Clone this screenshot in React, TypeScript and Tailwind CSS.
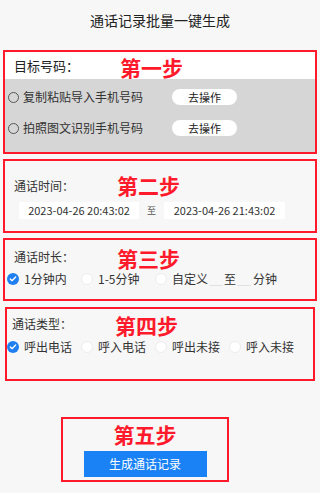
import { Check } from "lucide-react";

const font = { fontFamily: '"Noto Sans CJK SC", "Noto Sans", sans-serif' };

const Step = ({ text, className = "" }: { text: string; className?: string }) => (
  <span className={`text-[21px] font-bold leading-none text-[#ff1a2b] ${className}`}>{text}</span>
);

const Dot = ({ checked }: { checked?: boolean }) =>
  checked ? (
    <span className="flex h-[12px] w-[12px] items-center justify-center rounded-full bg-[#1f7ff0]">
      <Check className="h-[8px] w-[8px] text-white" strokeWidth={4} />
    </span>
  ) : (
    <span className="h-[12px] w-[12px] rounded-full border border-[#ececec] bg-white" />
  );

const Radio = ({ label, checked, className = "" }: { label: string; checked?: boolean; className?: string }) => (
  <div className={`flex items-center gap-[5px] ${className}`}>
    <Dot checked={checked} />
    <span className="text-[12px] text-[#333]">{label}</span>
  </div>
);

export default function App() {
  return (
    <div className="min-h-[493px] bg-[#f7f7f7] pb-2 text-[#333]" style={font}>
      {/* Title */}
      <div className="flex h-[40px] items-center justify-center text-[14px] text-[#222]">
        通话记录批量一键生成
      </div>

      {/* Step 1 */}
      <div className="mx-[3px] mt-[10px] h-[104px] border-2 border-[#ff1a2b]">
        <div className="flex h-[27px] items-center bg-white pl-[9px]">
          <span className="w-[106px] text-[13px] text-[#222]">目标号码：</span>
          <Step text="第一步" className="mt-[3px]" />
        </div>
        <div className="flex h-[73px] flex-col gap-[15px] bg-[#d6d6d6] pl-[3px] pt-[10px]">
          {["复制粘贴导入手机号码", "拍照图文识别手机号码"].map((t) => (
            <div key={t} className="flex h-[16px] items-center">
              <span className="h-[11px] w-[11px] rounded-full border border-[#555]" />
              <span className="ml-[4px] w-[149px] text-[12px] text-[#333]">{t}</span>
              <button className="h-[16px] w-[65px] rounded-full bg-white text-[11px] text-[#222]">去操作</button>
            </div>
          ))}
        </div>
      </div>

      {/* Step 2 */}
      <div className="mx-[3px] mt-[5px] h-[74px] border-2 border-[#ff1a2b] px-[7px] pt-[14px]">
        <div className="flex items-center pl-[2px]">
          <span className="w-[103px] text-[12px] text-[#333]">通话时间：</span>
          <Step text="第二步" />
        </div>
        <div className="mt-[6px] flex items-center pl-[7px]">
          <div className="flex h-[17px] w-[120px] items-center justify-center bg-white text-[11px] text-[#333]">
            2023-04-26 20:43:02
          </div>
          <span className="mx-[8px] text-[9px] text-[#555]">至</span>
          <div className="flex h-[17px] w-[121px] items-center justify-center bg-white text-[11px] text-[#333]">
            2023-04-26 21:43:02
          </div>
        </div>
      </div>

      {/* Step 3 */}
      <div className="mx-[3px] mt-[5px] h-[63px] border-2 border-[#ff1a2b] pl-[2px] pt-[4px]">
        <div className="flex items-center pl-[7px]">
          <span className="w-[103px] text-[12px] text-[#333]">通话时长：</span>
          <Step text="第三步" className="mt-[4px]" />
        </div>
        <div className="mt-[1px] flex items-center">
          <Radio label="1分钟内" checked className="w-[74px]" />
          <Radio label="1-5分钟" className="w-[74px]" />
          <Radio label="自定义" />
          <span className="ml-[1px] h-[14px] w-[14px] border-b border-[#e2e2e2]" />
          <span className="mx-[1px] text-[12px]">至</span>
          <span className="h-[14px] w-[14px] border-b border-[#e2e2e2]" />
          <span className="ml-[2px] text-[12px]">分钟</span>
        </div>
      </div>

      {/* Step 4 */}
      <div className="mx-[5px] mt-[6px] h-[74px] border-2 border-[#ff1a2b] pt-[2px]">
        <div className="flex items-center pl-[5px]">
          <span className="w-[103px] text-[12px] text-[#333]">通话类型：</span>
          <Step text="第四步" className="mt-[4px]" />
        </div>
        <div className="mt-[2px] flex items-center">
          <Radio label="呼出电话" checked className="w-[74px]" />
          <Radio label="呼入电话" className="w-[74px]" />
          <Radio label="呼出未接" className="w-[74px]" />
          <Radio label="呼入未接" />
        </div>
      </div>

      {/* Step 5 */}
      <div className="ml-[61px] mt-[36px] flex h-[65px] w-[168px] flex-col items-center border-2 border-[#ff1a2b] pt-[5px]">
        <Step text="第五步" />
        <button className="mt-[6px] h-[26px] w-[123px] bg-[#1a82f5] text-[12px] text-white">生成通话记录</button>
      </div>
    </div>
  );
}
